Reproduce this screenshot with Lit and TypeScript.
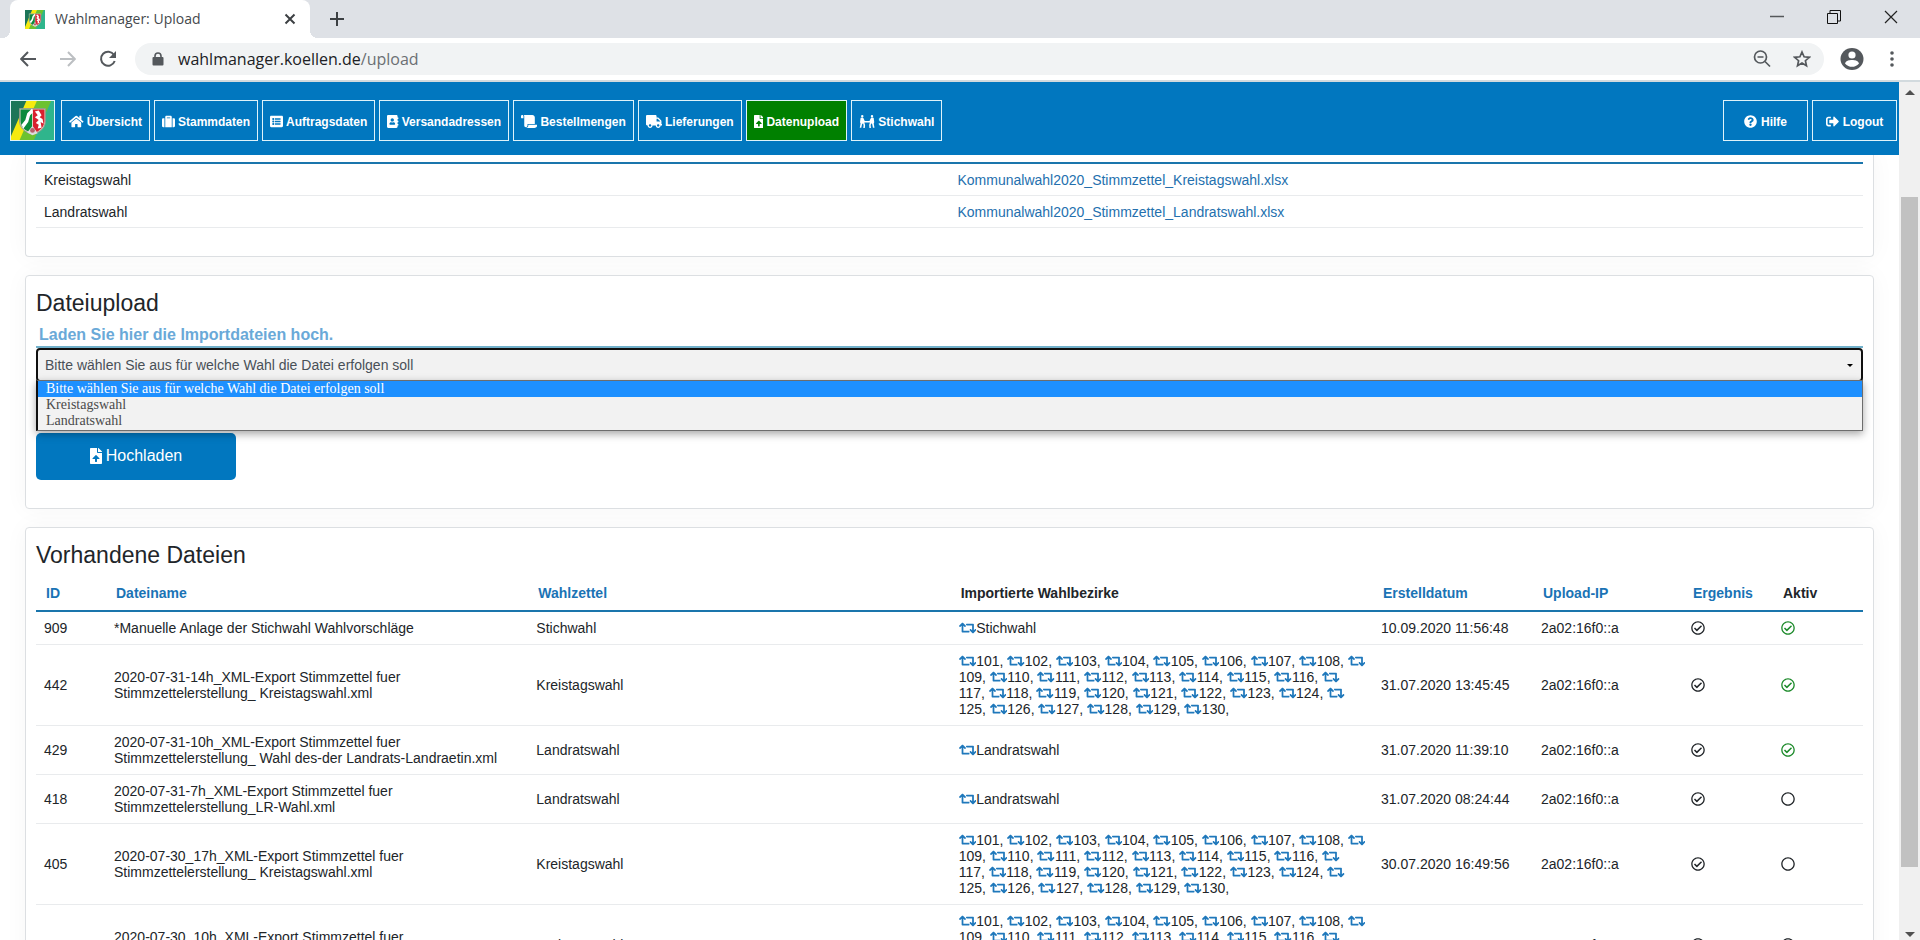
import { LitElement, html, css, nothing } from "lit";
import { customElement } from "lit/decorators.js";

type Glyph = { w: number; d: string };

const ICONS: Record<string, Glyph> = {
  home: { w: 576, d: "M280.37 148.26L96 300.11V464a16 16 0 0 0 16 16l112.06-.29a16 16 0 0 0 15.92-16V368a16 16 0 0 1 16-16h64a16 16 0 0 1 16 16v95.64a16 16 0 0 0 16 16.05L464 480a16 16 0 0 0 16-16V300L295.67 148.26a12.19 12.19 0 0 0-15.3 0zM571.6 251.47L488 182.56V44.05a12 12 0 0 0-12-12h-56a12 12 0 0 0-12 12v72.61L318.47 43a48 48 0 0 0-61 0L4.34 251.47a12 12 0 0 0-1.6 16.9l25.5 31A12 12 0 0 0 45.15 301l235.22-193.74a12.19 12.19 0 0 1 15.3 0L530.9 301a12 12 0 0 0 16.9-1.6l25.5-31a12 12 0 0 0-1.7-16.93z" },
  suitcase: { w: 512, d: "M128 480h256V80c0-26.5-21.5-48-48-48H176c-26.5 0-48 21.5-48 48v400zm64-384h128v32H192V96zm320 80v256c0 26.5-21.5 48-48 48h-48V128h48c26.5 0 48 21.5 48 48zM96 480H48c-26.5 0-48-21.5-48-48V176c0-26.5 21.5-48 48-48h48v352z" },
  list: { w: 512, d: "M464 480H48c-26.51 0-48-21.49-48-48V80c0-26.51 21.49-48 48-48h416c26.51 0 48 21.49 48 48v352c0 26.51-21.49 48-48 48zM128 120c-22.091 0-40 17.909-40 40s17.909 40 40 40 40-17.909 40-40-17.909-40-40-40zm0 96c-22.091 0-40 17.909-40 40s17.909 40 40 40 40-17.909 40-40-17.909-40-40-40zm0 96c-22.091 0-40 17.909-40 40s17.909 40 40 40 40-17.909 40-40-17.909-40-40-40zm288-136v-32c0-6.627-5.373-12-12-12H204c-6.627 0-12 5.373-12 12v32c0 6.627 5.373 12 12 12h200c6.627 0 12-5.373 12-12zm0 96v-32c0-6.627-5.373-12-12-12H204c-6.627 0-12 5.373-12 12v32c0 6.627 5.373 12 12 12h200c6.627 0 12-5.373 12-12zm0 96v-32c0-6.627-5.373-12-12-12H204c-6.627 0-12 5.373-12 12v32c0 6.627 5.373 12 12 12h200c6.627 0 12-5.373 12-12z" },
  book: { w: 448, d: "M436 160c6.6 0 12-5.4 12-12v-40c0-6.6-5.4-12-12-12h-20V48c0-26.5-21.5-48-48-48H48C21.5 0 0 21.5 0 48v416c0 26.5 21.5 48 48 48h320c26.5 0 48-21.5 48-48v-48h20c6.6 0 12-5.4 12-12v-40c0-6.6-5.4-12-12-12h-20v-64h20c6.6 0 12-5.4 12-12v-40c0-6.6-5.4-12-12-12h-20v-64h20zm-228-32c35.3 0 64 28.7 64 64s-28.7 64-64 64-64-28.7-64-64 28.7-64 64-64zm112 236.8c0 10.6-10 19.2-22.4 19.2H118.4C106 384 96 375.4 96 364.8v-19.2c0-31.8 30.1-57.6 67.2-57.6h5c12.3 5.1 25.7 8 39.8 8s27.6-2.9 39.8-8h5c37.1 0 67.2 25.8 67.2 57.6v19.2z" },
  scroll: { w: 640, d: "M48 0C21.53 0 0 21.53 0 48v64c0 8.84 7.16 16 16 16h80V48C96 21.53 74.47 0 48 0zm208 412.57V352h288V96c0-52.94-43.06-96-96-96H111.59C121.74 13.41 128 29.92 128 48v368c0 38.87 34.65 69.65 74.75 63.12C234.22 474 256 444.46 256 412.57zM288 384v32c0 52.93-43.06 96-96 96h336c61.86 0 112-50.14 112-112 0-8.84-7.16-16-16-16H288z" },
  truck: { w: 640, d: "M624 352h-16V243.9c0-12.7-5.1-24.9-14.1-33.9L494 110.1c-9-9-21.2-14.1-33.9-14.1H416V48c0-26.5-21.5-48-48-48H48C21.5 0 0 21.5 0 48v320c0 26.5 21.5 48 48 48h16c0 53 43 96 96 96s96-43 96-96h128c0 53 43 96 96 96s96-43 96-96h48c8.8 0 16-7.2 16-16v-32c0-8.8-7.2-16-16-16zM160 464c-26.5 0-48-21.5-48-48s21.5-48 48-48 48 21.5 48 48-21.5 48-48 48zm320 0c-26.5 0-48-21.5-48-48s21.5-48 48-48 48 21.5 48 48-21.5 48-48 48zm80-208H416V144h44.1l99.9 99.9V256z" },
  upload: { w: 384, d: "M224 136V0H24C10.7 0 0 10.7 0 24v464c0 13.3 10.7 24 24 24h336c13.3 0 24-10.7 24-24V160H248c-13.2 0-24-10.8-24-24zm65.18 216.01H224v80c0 8.84-7.16 16-16 16h-32c-8.84 0-16-7.16-16-16v-80H94.82c-14.28 0-21.41-17.29-11.27-27.36l96.42-95.7c6.65-6.61 17.39-6.61 24.04 0l96.42 95.7c10.15 10.07 3.03 27.36-11.25 27.36zM377 105L279.1 7c-4.5-4.5-10.6-7-17-7H256v128h128v-6.1c0-6.3-2.5-12.4-7-16.9z" },
  people: { w: 640, d: "M128 96a48 48 0 1 0 0-96 48 48 0 0 0 0 96zM512 96a48 48 0 1 0 0-96 48 48 0 0 0 0 96zM60 130C60 118 70 112 84 112H146C164 112 174 122 182 138L226 235H414L458 138C466 122 476 112 494 112H556C570 112 580 118 580 130L600 290 580 330 610 500H550L520 360 480 320 460 400 470 512H410L400 390 430 300H210L240 390 230 512H170L180 400 160 320 120 360 90 500H30L60 330 40 290z" },
  help: { w: 512, d: "M504 256c0 136.997-111.043 248-248 248S8 392.997 8 256C8 119.083 119.043 8 256 8s248 111.083 248 248zM262.655 90c-54.497 0-89.255 22.957-116.549 63.758-3.536 5.286-2.353 12.415 2.715 16.258l34.699 26.31c5.205 3.947 12.621 3.008 16.665-2.122 17.864-22.658 30.113-35.797 57.303-35.797 20.429 0 45.698 13.148 45.698 32.958 0 14.976-12.363 22.667-32.534 33.976C247.128 238.528 216 254.941 216 296v4c0 6.627 5.373 12 12 12h56c6.627 0 12-5.373 12-12v-1.333c0-28.462 83.186-29.647 83.186-106.667 0-58.002-60.165-102-116.531-102zM256 338c-25.365 0-46 20.635-46 46 0 25.364 20.635 46 46 46s46-20.636 46-46c0-25.365-20.635-46-46-46z" },
  logout: { w: 512, d: "M497 273L329 441c-15 15-41 4.5-41-17v-96H152c-13.3 0-24-10.7-24-24v-96c0-13.3 10.7-24 24-24h136V88c0-21.4 25.9-32 41-17l168 168c9.3 9.4 9.3 24.6 0 34zM192 436v-40c0-6.6-5.4-12-12-12H96c-17.7 0-32-14.3-32-32V160c0-17.7 14.3-32 32-32h84c6.6 0 12-5.4 12-12V76c0-6.6-5.4-12-12-12H96c-53 0-96 43-96 96v192c0 53 43 96 96 96h84c6.6 0 12-5.4 12-12z" },
  retweet: { w: 640, d: "M629.657 343.598L528.971 444.284c-9.373 9.372-24.568 9.372-33.941 0L394.343 343.598c-9.373-9.373-9.373-24.569 0-33.941l10.823-10.823c9.562-9.562 25.133-9.34 34.419.492L480 342.118V160H292.451a24.005 24.005 0 0 1-16.971-7.029l-16-16C244.361 121.851 255.069 96 276.451 96H520c13.255 0 24 10.745 24 24v222.118l40.416-42.792c9.285-9.831 24.856-10.054 34.419-.492l10.823 10.823c9.372 9.372 9.372 24.569-.001 33.941zm-265.138 15.431A23.999 23.999 0 0 0 347.548 352H160V169.881l40.416 42.792c9.286 9.831 24.856 10.054 34.419.491l10.822-10.822c9.373-9.373 9.373-24.569 0-33.941L144.971 67.716c-9.373-9.373-24.569-9.373-33.941 0L10.343 168.402c-9.373 9.373-9.373 24.569 0 33.941l10.822 10.822c9.562 9.562 25.133 9.34 34.419-.491L96 169.882V392c0 13.255 10.745 24 24 24h243.549c21.382 0 32.09-25.851 16.971-40.971l-16.001-16z" },
  check: { w: 512, d: "M256 8C119.033 8 8 119.033 8 256s111.033 248 248 248 248-111.033 248-248S392.967 8 256 8zm0 48c110.532 0 200 89.451 200 200 0 110.532-89.451 200-200 200-110.532 0-200-89.451-200-200 0-110.532 89.451-200 200-200m140.204 130.267l-22.536-22.718c-4.667-4.705-12.265-4.736-16.97-.068L215.346 303.697l-59.792-60.277c-4.667-4.705-12.265-4.736-16.97-.069l-22.719 22.536c-4.705 4.667-4.736 12.265-.068 16.971l90.781 91.516c4.667 4.705 12.265 4.736 16.97.068l172.589-171.204c4.704-4.668 4.734-12.266.067-16.971z" },
  circle: { w: 512, d: "M256 8C119 8 8 119 8 256s111 248 248 248 248-111 248-248S393 8 256 8zm0 448c-110.5 0-200-89.5-200-200S145.5 56 256 56s200 89.5 200 200-89.5 200-200 200z" },
};

const icon = (name: string, cls = "") => {
  const g = ICONS[name];
  return html`<svg class="fa w${g.w} ${cls}" viewBox="0 0 ${g.w} 512" aria-hidden="true"><path d=${g.d}></path></svg>`;
};

const coat = (cls: string) => html`<svg class=${cls} viewBox="0 0 45 41" preserveAspectRatio="none" aria-hidden="true">
  <rect width="45" height="41" fill="#2fb58c"></rect>
  <path d="M0 0H18L0 38z" fill="#1c7558"></path>
  <path d="M16 0H28L10 41H0V37z" fill="#f6ea10"></path>
  <path d="M27 0H42L24 41H9z" fill="#6cc230"></path>
  <path d="M9 8H36V21C36 28 31 33 22.500 35 14 33 9 28 9 21z" fill="#d9d4c4" stroke="#8f9a8a"></path>
  <path d="M10 9H22V33C15 32 10 27 10 21z" fill="#0b8a3c"></path>
  <path d="M23 9H35V21C35 27 30 32 23 34z" fill="#d9202e"></path>
  <path d="M22 8L17 13 15 20 11 25 13 29 18 22 20 15 23 12z" fill="#fff"></path>
  <path d="M25 11L29 10 32 15 30 17 33 19 34 24 31 22 32 28 28 29 29 25 26 23 29 20 25 17 28 15z" fill="#fff"></path>
  <path d="M22.500 26L28 34 22.500 36 17 33z" fill="#ddd"></path>
  <circle cx="22.500" cy="31" r="2.500" fill="#b8606a"></circle>
</svg>`;

@customElement("browser-bar")
class BrowserBar extends LitElement {
  static styles = css`
    :host { display: block; font-family: "Open Sans", "Noto Sans", sans-serif; }
    button { border: 0; padding: 0; background: none; display: flex; align-items: center; justify-content: center; font: inherit; }
    .tabs { display: flex; height: 38px; background: #dee1e6; padding: 0 1px 0 10px; }
    .tab { position: relative; display: flex; align-items: center; width: 300px; box-sizing: border-box; padding: 0 12px 0 15px; background: #fff; border-radius: 8px 8px 0 0; gap: 10px; }
    .tab::before, .tab::after { content: ""; position: absolute; bottom: 0; width: 8px; height: 8px; }
    .tab::before { left: -8px; background: radial-gradient(circle at 0 0, transparent 8px, #fff 8px); }
    .tab::after { right: -8px; background: radial-gradient(circle at 100% 0, transparent 8px, #fff 8px); }
    .fav { width: 20px; height: 19px; }
    .title { flex: 1; font-size: 14px; line-height: 20px; color: #45494d; }
    .plus { width: 54px; }
    .win { display: flex; margin-left: auto; }
    .win button { width: 57px; height: 33px; }
    .tools { display: flex; align-items: center; height: 44px; padding: 0 8px; background: #fff; border-bottom: 2px solid #d2dade; box-sizing: border-box; }
    .nav { width: 40px; height: 40px; }
    .omni { flex: 1; display: flex; align-items: center; height: 32px; margin: 0 8px 0 7px; border-radius: 16px; background: #f1f3f4; padding: 0 2px 0 17px; }
    .url { flex: 1; margin-left: 14px; font-size: 16px; line-height: 24px; color: #202124; }
    .url span { color: #6b6f73; }
    .omni button { width: 40px; height: 32px; }
    .avatar { width: 40px; height: 40px; }
    .more { width: 40px; height: 40px; }
  `;
  render() {
    return html`
      <div class="tabs">
        <div class="tab">
          ${coat("fav")}
          <span class="title">Wahlmanager: Upload</span>
          <button aria-label="Tab schließen"><svg width="16" height="16" viewBox="0 0 16 16"><path d="M3.500 3.500L12.500 12.500M12.500 3.500L3.500 12.500" stroke="#3c4043" stroke-width="2"></path></svg></button>
        </div>
        <button class="plus" aria-label="Neuer Tab"><svg width="16" height="16" viewBox="0 0 16 16"><path d="M8 1V15M1 8H15" stroke="#3c4043" stroke-width="2"></path></svg></button>
        <div class="win">
          <button aria-label="Minimieren"><svg width="14" height="14" viewBox="0 0 14 14"><path d="M0 6.500H14" stroke="#55585b" stroke-width="1.500"></path></svg></button>
          <button aria-label="Verkleinern"><svg width="14" height="14" viewBox="0 0 14 14" fill="none" stroke="#111"><path d="M.5 3.500H10.500V13.500H.5zM3 3V.5H13.500V11H11"></path></svg></button>
          <button aria-label="Schließen"><svg width="14" height="14" viewBox="0 0 14 14"><path d="M1 1L13 13M13 1L1 13" stroke="#222" stroke-width="1.200"></path></svg></button>
        </div>
      </div>
      <div class="tools">
        <button class="nav" aria-label="Zurück"><svg width="16" height="16" viewBox="0 0 16 16" fill="none" stroke="#54585c" stroke-width="2"><path d="M16 8H1.500M8 1L1.200 8 8 15"></path></svg></button>
        <button class="nav" aria-label="Vorwärts"><svg width="16" height="16" viewBox="0 0 16 16" fill="none" stroke="#bcbfc2" stroke-width="2"><path d="M0 8H14.500M8 1L14.800 8 8 15"></path></svg></button>
        <button class="nav" aria-label="Neu laden"><svg width="18" height="18" viewBox="0 0 18 18"><path d="M15 5A7 7 0 1 0 15.700 11" fill="none" stroke="#54585c" stroke-width="2"></path><path d="M17 1V8H10z" fill="#54585c"></path></svg></button>
        <div class="omni">
          <svg width="12" height="14" viewBox="0 0 12 14"><path d="M3 6V4A3 3 0 0 1 9 4V6" fill="none" stroke="#54585c" stroke-width="1.600"></path><rect x="0.500" y="5" width="11" height="8.500" rx="1" fill="#54585c"></rect></svg>
          <div class="url">wahlmanager.koellen.de<span>/upload</span></div>
          <button aria-label="Zoom"><svg width="18" height="18" viewBox="0 0 18 18" fill="none" stroke="#54585c" stroke-width="1.700"><circle cx="7.500" cy="7" r="6"></circle><path d="M4.500 7H10.500M12 11.500L17 16.500"></path></svg></button>
          <button aria-label="Lesezeichen"><svg width="18" height="18" viewBox="0 0 18 18" fill="none" stroke="#54585c" stroke-width="1.700"><path d="M9 2L11.100 6.800 16.300 7.300 12.400 10.700 13.500 15.800 9 13.100 4.500 15.800 5.600 10.700 1.700 7.300 6.900 6.800z"></path></svg></button>
        </div>
        <button class="avatar" aria-label="Profil"><svg width="24" height="22" viewBox="0 0 24 22"><ellipse cx="12" cy="11" rx="11.500" ry="11" fill="#54585c"></ellipse><circle cx="12" cy="7" r="3.600" fill="#fff"></circle><path d="M5 15.500C6 12.500 9 12 12 12S18 12.500 19 15.500C17 18 14.500 18.800 12 18.800S7 18 5 15.500z" fill="#fff"></path></svg></button>
        <button class="more" aria-label="Menü"><svg width="4" height="16" viewBox="0 0 4 16" fill="#54585c"><circle cx="2" cy="2" r="1.800"></circle><circle cx="2" cy="8" r="1.800"></circle><circle cx="2" cy="14" r="1.800"></circle></svg></button>
      </div>`;
  }
}

type Row = { id: string; file: string[]; kind: string; parts: string[]; date: string; ip: string; active: boolean };

const BEZIRKE = Array.from({ length: 30 }, (_, i) => `${101 + i}`);

const ROWS: Row[] = [
  { id: "909", file: ["*Manuelle Anlage der Stichwahl Wahlvorschläge"], kind: "Stichwahl", parts: ["Stichwahl"], date: "10.09.2020 11:56:48", ip: "2a02:16f0::a", active: true },
  { id: "442", file: ["2020-07-31-14h_XML-Export Stimmzettel fuer", "Stimmzettelerstellung_ Kreistagswahl.xml"], kind: "Kreistagswahl", parts: BEZIRKE, date: "31.07.2020 13:45:45", ip: "2a02:16f0::a", active: true },
  { id: "429", file: ["2020-07-31-10h_XML-Export Stimmzettel fuer", "Stimmzettelerstellung_ Wahl des-der Landrats-Landraetin.xml"], kind: "Landratswahl", parts: ["Landratswahl"], date: "31.07.2020 11:39:10", ip: "2a02:16f0::a", active: true },
  { id: "418", file: ["2020-07-31-7h_XML-Export Stimmzettel fuer", "Stimmzettelerstellung_LR-Wahl.xml"], kind: "Landratswahl", parts: ["Landratswahl"], date: "31.07.2020 08:24:44", ip: "2a02:16f0::a", active: false },
  { id: "405", file: ["2020-07-30_17h_XML-Export Stimmzettel fuer", "Stimmzettelerstellung_ Kreistagswahl.xml"], kind: "Kreistagswahl", parts: BEZIRKE, date: "30.07.2020 16:49:56", ip: "2a02:16f0::a", active: false },
  { id: "398", file: ["2020-07-30_10h_XML-Export Stimmzettel fuer", "Stimmzettelerstellung_ Kreistagswahl.xml"], kind: "Kreistagswahl", parts: BEZIRKE, date: "30.07.2020 09:59:59", ip: "2a02:16f0::a", active: false },
];

/* District lists break after every eighth number, behind the icon of the next one. */
const PER_LINE = 8;
const district = (p: string, i: number) =>
  html`${icon("retweet")}${i && i % PER_LINE === 0 ? html`<br>` : nothing}${p}, `;

const NAV: [string, string][] = [
  ["home", "Übersicht"], ["suitcase", "Stammdaten"], ["list", "Auftragsdaten"], ["book", "Versandadressen"],
  ["scroll", "Bestellmengen"], ["truck", "Lieferungen"], ["upload", "Datenupload"], ["people", "Stichwahl"],
];

@customElement("app-root")
class AppRoot extends LitElement {
  static styles = css`
    :host { display: flex; flex-direction: column; height: 100vh; overflow: hidden; background: #fff; color: #212529; font-family: "Liberation Sans", Arial, sans-serif; font-size: 14px; line-height: 16px; }
    a { color: #2470ae; text-decoration: none; }
    .fa { height: 1em; fill: currentColor; }
    .w384 { width: 0.75em; } .w448 { width: 0.875em; } .w512 { width: 1em; } .w576 { width: 1.125em; } .w640 { width: 1.25em; }
    .body { flex: 1; display: flex; min-height: 0; }
    .page { flex: 1; min-width: 0; display: flex; flex-direction: column; overflow: hidden; }
    .navbar { flex: none; display: flex; align-items: center; gap: 4px; padding: 18px 2px 14px 10px; background: #0177bf; }
    .brand { display: flex; box-sizing: border-box; width: 45px; height: 41px; border: 1px solid #dff3fa; margin-right: 2px; }
    .brandpic { width: 100%; height: 100%; }
    .item { display: flex; align-items: center; justify-content: center; gap: 3px; box-sizing: border-box; height: 41px; padding: 2px 7px 0; border: 1px solid #dff3fa; color: #fff; font-size: 12px; font-weight: bold; white-space: nowrap; }
    .item .fa { font-size: 13px; }
    .item.on { background: #008000; }
    .item.side { width: 85px; gap: 4px; }
    .item.first { margin-left: auto; }
    .content { flex: 1; min-height: 0; overflow: hidden; display: flex; flex-direction: column; gap: 18px; padding: 0 25px; }
    .card { flex: none; padding: 13px 10px 28px; border: 1px solid #dcdfe2; border-radius: 4px; box-shadow: 0 0 24px rgba(0, 0, 0, 0.04); }
    .card.cut { padding-top: 7px; border-top: 0; border-radius: 0 0 4px 4px; }
    h2 { margin: 0 0 8px; font-size: 23px; line-height: 28px; font-weight: normal; }
    table { width: 100%; table-layout: fixed; border-collapse: separate; border-spacing: 0; }
    td { padding: 8px; border-bottom: 1px solid #e9ebed; vertical-align: middle; }
    th { padding: 8px 10px 9px; border-bottom: 2px solid #1a75ac; text-align: left; }
    th a { color: #1a73b5; }
    .forms { border-top: 2px solid #1a75ac; }
    .forms td { padding: 8px 8px 7px; }
    .c-id { width: 70px; } .c-date { width: 160px; } .c-ip { width: 150px; } .c-res { width: 90px; } .c-act { width: 90px; }
    td.parts { padding-right: 4px; }
    td.parts .fa { color: #1f78bb; vertical-align: -2px; }
    .flag { display: block; }
    .ok { color: #1c8a2a; }
    .label { display: block; padding: 0 3px 1px; border-bottom: 2px solid #72b1cb; color: #6aa9d8; font-size: 16px; line-height: 20px; font-weight: bold; }
    .pick { position: relative; display: grid; margin-bottom: 51px; }
    select { grid-area: 1 / 1; appearance: none; width: 100%; height: 34px; margin: 0; padding: 0 7px; border: 2px solid #101010; border-radius: 4px; background: #f2f2f2; color: #495057; font: inherit; outline: 0; }
    .caret { grid-area: 1 / 1; justify-self: end; align-self: center; margin-right: 10px; border: 3px solid transparent; border-top-color: #000; border-bottom: 0; pointer-events: none; }
    .menu { position: absolute; z-index: 1; top: 32px; left: 0; right: 0; margin: 0; padding: 0 0 1px; list-style: none; border: 1px solid #6d6d6d; border-left: 2px solid #101010; background: #f2f2f2; box-shadow: 0 3px 8px rgba(0, 0, 0, 0.35); color: #4a4a4a; font-family: "Liberation Serif", "Times New Roman", serif; }
    .menu li { padding: 0 8px; line-height: 16px; }
    .menu .sel { background: #1e90ff; color: #fff; }
    .send { display: flex; align-items: center; justify-content: center; gap: 4px; width: 200px; height: 47px; padding: 0 0 2px; border: 0; border-radius: 5px; background: #0177bf; color: #fff; font: inherit; font-size: 16px; }
    .scroll { flex: none; width: 21px; display: flex; flex-direction: column; align-items: center; background: #f0f0f0; }
    .up, .down { display: flex; align-items: center; justify-content: center; flex: none; height: 20px; }
    .down { height: 12px; }
    .track { flex: 1; width: 17px; padding-top: 95px; padding-bottom: 61px; display: flex; }
    .thumb { flex: 1; background: #c1c1c1; }
  `;
  render() {
    return html`
      <browser-bar></browser-bar>
      <div class="body">
        <div class="page">
          <nav class="navbar">
            <a class="brand" href="#" aria-label="Wahlmanager">${coat("brandpic")}</a>
            ${NAV.map(([i, t]) => html`<a href="#" class="item ${t === "Datenupload" ? "on" : ""}">${icon(i)}${t}</a>`)}
            <a href="#" class="item side first">${icon("help")}Hilfe</a>
            <a href="#" class="item side">${icon("logout")}Logout</a>
          </nav>
          <main class="content">
            <section class="card cut">
              <table class="forms">
                <tbody>
                  ${["Kreistagswahl", "Landratswahl"].map((n) => html`<tr><td>${n}</td><td><a href="#">Kommunalwahl2020_Stimmzettel_${n}.xlsx</a></td></tr>`)}
                </tbody>
              </table>
            </section>
            <section class="card">
              <h2>Dateiupload</h2>
              <label class="label" for="wahl">Laden Sie hier die Importdateien hoch.</label>
              <div class="pick">
                <select id="wahl">
                  <option>Bitte wählen Sie aus für welche Wahl die Datei erfolgen soll</option>
                  <option>Kreistagswahl</option>
                  <option>Landratswahl</option>
                </select>
                <span class="caret"></span>
                <ul class="menu">
                  <li class="sel">Bitte wählen Sie aus für welche Wahl die Datei erfolgen soll</li>
                  <li>Kreistagswahl</li>
                  <li>Landratswahl</li>
                </ul>
              </div>
              <button class="send">${icon("upload")}Hochladen</button>
            </section>
            <section class="card">
              <h2>Vorhandene Dateien</h2>
              <table>
                <colgroup><col class="c-id"><col><col><col><col class="c-date"><col class="c-ip"><col class="c-res"><col class="c-act"></colgroup>
                <thead>
                  <tr>
                    <th><a href="#">ID</a></th><th><a href="#">Dateiname</a></th><th><a href="#">Wahlzettel</a></th><th>Importierte Wahlbezirke</th>
                    <th><a href="#">Erstelldatum</a></th><th><a href="#">Upload-IP</a></th><th><a href="#">Ergebnis</a></th><th>Aktiv</th>
                  </tr>
                </thead>
                <tbody>
                  ${ROWS.map((r) => html`<tr>
                    <td>${r.id}</td>
                    <td>${r.file.map((f, i) => html`${i ? html`<br>` : nothing}${f}`)}</td>
                    <td>${r.kind}</td>
                    <td class="parts">${r.parts.length > 1 ? r.parts.map(district) : html`${icon("retweet")}${r.parts[0]}`}</td>
                    <td>${r.date}</td>
                    <td>${r.ip}</td>
                    <td>${icon("check", "flag")}</td>
                    <td>${r.active ? icon("check", "flag ok") : icon("circle", "flag")}</td>
                  </tr>`)}
                </tbody>
              </table>
            </section>
          </main>
        </div>
        <div class="scroll" aria-hidden="true">
          <span class="up"><svg width="10" height="5" viewBox="0 0 10 5"><path d="M5 0L10 5H0z" fill="#505050"></path></svg></span>
          <div class="track"><div class="thumb"></div></div>
          <span class="down"><svg width="10" height="5" viewBox="0 0 10 5"><path d="M0 0H10L5 5z" fill="#505050"></path></svg></span>
        </div>
      </div>`;
  }
}
